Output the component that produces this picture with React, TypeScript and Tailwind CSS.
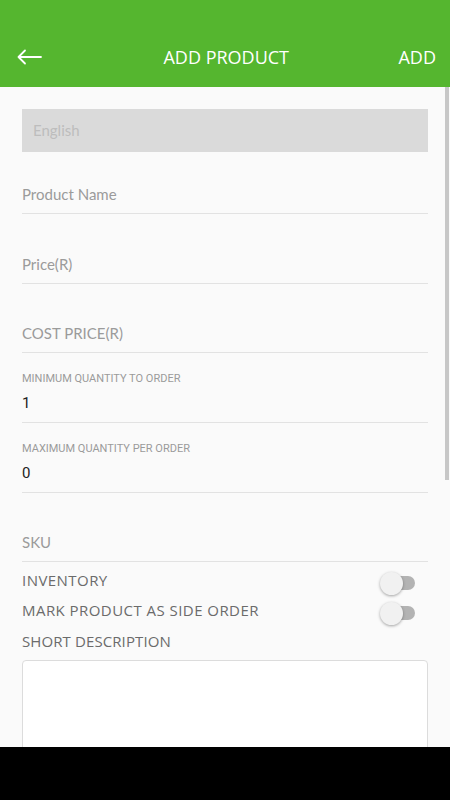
import React from 'react';

const lato = { fontFamily: 'Lato, "Open Sans", sans-serif' };

const Toggle: React.FC = () => (
  <div className="relative w-[36px] h-[24px] flex items-center">
    <div className="absolute left-[8px] w-[27px] h-[14px] rounded-full bg-[#b3b3b3]" />
    <div className="absolute left-0 w-[23px] h-[23px] rounded-full bg-[#f1f1f1] shadow-[0_1px_3px_rgba(0,0,0,0.35)]" />
  </div>
);

const TextField: React.FC<{ placeholder: string; h: string }> = ({ placeholder, h }) => (
  <div className={`${h} flex flex-col justify-end pb-[9px] border-b border-[#e2e2e2]`}>
    <div className="text-[15px] leading-5 text-[#9b9b9b] font-['Lato',sans-serif]">{placeholder}</div>
  </div>
);

const QtyField: React.FC<{ label: string; value: string }> = ({ label, value }) => (
  <div className="h-[70px] flex flex-col justify-end pb-[9px] border-b border-[#e2e2e2]">
    <div className="text-[11px] leading-[14px] text-[#9b9b9b] font-['Roboto',sans-serif]">{label}</div>
    <div className="mt-[7px] text-[15px] leading-5 text-[#222] font-['Roboto',sans-serif]">{value}</div>
  </div>
);

export default function App() {
  return (
    <div className="w-[450px] h-[800px] flex flex-col bg-[#fafafa] overflow-hidden">
      <header className="h-[87px] bg-[#55b62f] flex items-end pb-[12px] px-[17px] shrink-0">
        <div className="w-full h-[36px] flex items-center justify-between">
          <svg width="25" height="16" viewBox="0 0 25 16" fill="none" stroke="white" strokeWidth="1.8" strokeLinecap="round" strokeLinejoin="round">
            <path d="M24 8H1.5M8 1.5L1.5 8L8 14.5" />
          </svg>
          <div className="text-white text-[18px] font-['Open_Sans',sans-serif] ml-[12px]">ADD PRODUCT</div>
          <div className="text-white text-[18px] font-['Open_Sans',sans-serif] -mr-[3px]">ADD</div>
        </div>
      </header>

      <main className="relative flex-1 overflow-hidden px-[22px]">
        <div className="absolute right-[1px] top-0 w-[4px] h-[393px] bg-[#c7c7c7]" />

        <div className="mt-[22px] h-[43px] bg-[#dadada] flex items-center px-[11px]">
          <span className="text-[15px] text-[#bdbdbd]" style={lato}>English</span>
        </div>

        <TextField placeholder="Product Name" h="h-[62px]" />
        <TextField placeholder="Price(R)" h="h-[70px]" />
        <TextField placeholder="COST PRICE(R)" h="h-[69px]" />
        <QtyField label="MINIMUM QUANTITY TO ORDER" value="1" />
        <QtyField label="MAXIMUM QUANTITY PER ORDER" value="0" />
        <TextField placeholder="SKU" h="h-[69px]" />

        <div className="mt-[8px] flex items-center justify-between pr-[12px] h-[20px]">
          <span className="text-[15px] leading-5 tracking-[0.45px] text-[#6b6b6b] font-['Open_Sans',sans-serif]">INVENTORY</span>
          <div className="mt-[6px]"><Toggle /></div>
        </div>
        <div className="mt-[10px] flex items-center justify-between pr-[12px] h-[20px]">
          <span className="text-[15px] leading-5 tracking-[0.45px] text-[#6b6b6b] font-['Open_Sans',sans-serif]">MARK PRODUCT AS SIDE ORDER</span>
          <div className="mt-[6px]"><Toggle /></div>
        </div>
        <div className="mt-[9px] h-[20px]">
          <span className="text-[15px] leading-5 tracking-[0.1px] text-[#6b6b6b] font-['Open_Sans',sans-serif]">SHORT DESCRIPTION</span>
        </div>

        <div className="mt-[11px] h-[140px] bg-white border border-[#dcdcdc] rounded-[4px]" />
      </main>

      <div className="h-[53px] bg-black shrink-0" />
    </div>
  );
}
